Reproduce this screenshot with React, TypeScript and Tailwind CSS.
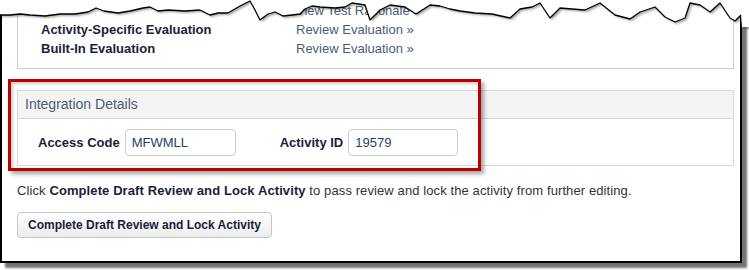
const tear: [number, number][] = [
  [0, 15], [10, 15], [20, 14], [30, 15], [45, 16], [60, 14], [75, 14], [88, 12], [96, 8], [104, 11],
  [118, 13], [130, 11], [143, 8], [150, 7], [158, 11], [168, 10], [185, 11], [200, 10], [210, 15],
  [218, 13], [228, 13], [240, 6], [250, 1], [255, 10], [260, 20], [268, 14], [275, 12], [283, 16],
  [292, 15], [300, 14], [305, 9], [312, 6], [320, 7], [335, 8], [345, 7], [352, 3], [365, 5], [370, 20],
  [380, 10], [390, 5], [405, 7], [416, 14], [430, 5], [440, 6], [450, 9], [460, 11], [475, 13],
  [492, 14], [510, 18], [520, 9], [532, 7], [540, 3], [550, 18], [560, 8], [572, 9], [585, 10],
  [600, 3], [615, 15], [630, 19], [640, 12], [655, 7], [665, 17], [675, 22], [685, 18], [690, 3],
  [700, 5], [710, 12], [720, 3], [730, 18], [735, 21], [741, 15],
]

function TornEdge() {
  const line = tear.map(([x, y]) => `${x},${y}`).join(' ')
  const fill = `0,0 ${line} 742,27 749,27 749,0`
  return (
    <svg className="absolute left-0 top-0" width="749" height="30" viewBox="0 0 749 30">
      <defs>
        <filter id="tearShadow" x="-5%" y="-50%" width="110%" height="200%">
          <feDropShadow dx="2" dy="2" stdDeviation="1.2" floodColor="#000" floodOpacity="0.35" />
        </filter>
      </defs>
      <polygon points={fill} fill="#fff" filter="url(#tearShadow)" />
      <polyline points={line} fill="none" stroke="#000" strokeWidth="1.3" strokeLinejoin="round" />
    </svg>
  )
}

export default function App() {
  return (
    <div className="relative w-[749px] h-[270px] bg-white overflow-hidden font-['Liberation_Sans',Arial,sans-serif]">
      <div className="w-[742px] h-[263px] border-l-2 border-r-2 border-b-2 border-black bg-white shadow-[5px_5px_2px_rgba(0,0,0,0.55)] pl-[15px] pr-[6px]">
        {/* Evaluations */}
        <div className="border-x border-b border-[#ccc] pt-px pb-[10px] text-[13px]">
          {[
            ['', 'View Test Rationale »'],
            ['Activity-Specific Evaluation', 'Review Evaluation »'],
            ['Built-In Evaluation', 'Review Evaluation »'],
          ].map(([label, link]) => (
            <div key={link + label} className="flex items-center h-[19px]">
              <span className="w-[278px] pl-[23px] font-bold text-[#1c1c3a]">{label}</span>
              <span className="text-[#4a5b78]">{link}</span>
            </div>
          ))}
        </div>

        {/* Integration Details */}
        <div className="mt-[21px] border border-[#d8d8d8]">
          <div className="h-[28px] flex items-center px-[7px] bg-[#f4f4f4] border-b border-[#d8d8d8] text-[14px] text-[#4b5d70]">
            Integration Details
          </div>
          <div className="flex items-center pt-[10px] pb-[9px] pl-[20px] text-[13px]">
            <span className="font-bold text-[#1c1c3a] mr-[5px]">Access Code</span>
            <div className="w-[111px] h-[27px] border border-[#ccc] rounded-[4px] flex items-center px-[6px] text-[#1f3f6a]">
              MFWMLL
            </div>
            <span className="ml-[44px] font-bold text-[#1c1c3a] mr-[5px]">Activity ID</span>
            <div className="w-[110px] h-[27px] border border-[#ccc] rounded-[4px] flex items-center px-[6px] text-[#1f3f6a]">
              19579
            </div>
          </div>
        </div>

        <p className="mt-[16px] text-[13px] leading-[18px] tracking-[0.1px] text-[#333]">
          Click <span className="font-bold text-[#1c1c3a]">Complete Draft Review and Lock Activity</span> to pass review and lock the activity from further editing.
        </p>

        <button className="mt-[12px] h-[26px] px-[10px] border border-[#c4c4c4] rounded-[4px] bg-gradient-to-b from-white to-[#ececec] text-[12px] font-bold text-[#1c1c3a]">
          Complete Draft Review and Lock Activity
        </button>
      </div>

      {/* red highlight annotation */}
      <div className="absolute left-[8px] top-[79px] w-[473px] h-[92px] border-[3px] border-[#c00000] shadow-[3px_3px_4px_rgba(0,0,0,0.35),inset_2px_2px_3px_rgba(0,0,0,0.2)]" />

      <TornEdge />
    </div>
  )
}
